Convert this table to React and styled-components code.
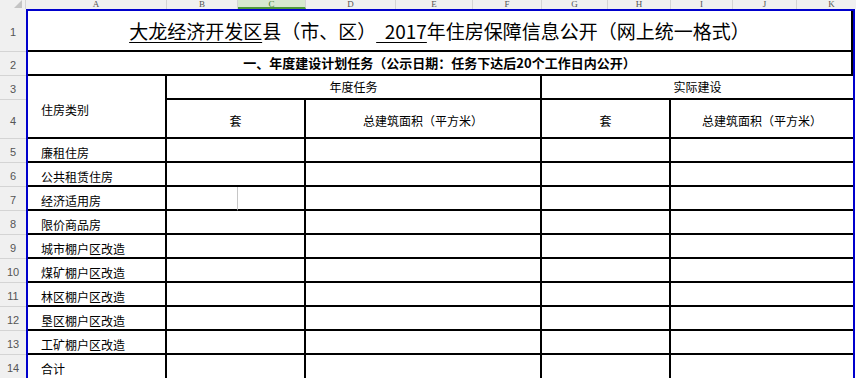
import React from "react";
import styled, { createGlobalStyle } from "styled-components";

const GlobalStyle = createGlobalStyle`
  html, body {
    margin: 0;
    padding: 0;
    background: #fff;
    overflow: hidden;
  }
  body {
    font-family: "Noto Sans CJK SC", "Liberation Sans", sans-serif;
  }
`;

const columns = [
  { label: "A", width: 141 },
  { label: "B", width: 71 },
  { label: "C", width: 68, selected: true },
  { label: "D", width: 90 },
  { label: "E", width: 77 },
  { label: "F", width: 69 },
  { label: "G", width: 66 },
  { label: "H", width: 63 },
  { label: "I", width: 62 },
  { label: "J", width: 64 },
  { label: "K", width: 70 },
];

// the last row runs past the bottom of the window
const rowHeights = [43, 24, 24, 39, 24, 24, 24, 24, 24, 24, 24, 24, 24, 30];

const housingTypes = [
  "廉租住房",
  "公共租赁住房",
  "经济适用房",
  "限价商品房",
  "城市棚户区改造",
  "煤矿棚户区改造",
  "林区棚户区改造",
  "垦区棚户区改造",
  "工矿棚户区改造",
  "合计",
];

export default function App() {
  return (
    <Sheet>
      <GlobalStyle />
      <ColBar>
        <Corner>
          <CornerMark />
        </Corner>
        {columns.map((c) => (
          <ColLetter key={c.label} $w={c.width} $selected={c.selected}>
            {c.label}
          </ColLetter>
        ))}
      </ColBar>
      <Body>
        <RowHeads>
          {rowHeights.map((h, i) => (
            <RowNum key={i} $h={h} $cut={i === rowHeights.length - 1}>
              {i + 1}
            </RowNum>
          ))}
        </RowHeads>
        <Table>
          <Cell $col="1 / 7" $row="1" $size={19}>
            <Title>
              <U>大龙经济开发区</U>县（市、区）<U>{"\u00a0\u00a02017"}</U>年住房保障信息公开（网上统一格式）
            </Title>
          </Cell>
          <Cell $col="1 / 7" $row="2" $bold $size={13}>
            一、年度建设计划任务（公示日期：任务下达后20个工作日内公开）
          </Cell>
          <Cell $col="1" $row="3 / 5" $left $pt={6}>
            住房类别
          </Cell>
          <Cell $col="2 / 5" $row="3">年度任务</Cell>
          <Cell $col="5 / 7" $row="3" $last>
            实际建设
          </Cell>
          <Cell $col="2 / 4" $row="4" $pt={4}>套</Cell>
          <Cell $col="4" $row="4" $pt={4}>总建筑面积（平方米）</Cell>
          <Cell $col="5" $row="4" $pt={4}>套</Cell>
          <Cell $col="6" $row="4" $last $pt={4}>
            总建筑面积（平方米）
          </Cell>
          {housingTypes.map((t, i) => {
            const r = String(i + 5);
            const split = t === "经济适用房";
            return (
              <React.Fragment key={t}>
                <Cell $col="1" $row={r} $left $top>
                  {t}
                </Cell>
                {split ? (
                  <>
                    <Cell $col="2" $row={r} $grid />
                    <Cell $col="3" $row={r} />
                  </>
                ) : (
                  <Cell $col="2 / 4" $row={r} />
                )}
                <Cell $col="4" $row={r} />
                <Cell $col="5" $row={r} />
                <Cell $col="6" $row={r} $last />
              </React.Fragment>
            );
          })}
        </Table>
      </Body>
    </Sheet>
  );
}

const Sheet = styled.div`
  width: 856px;
  height: 378px;
  overflow: hidden;
  display: flex;
  flex-direction: column;
`;

const ColBar = styled.div`
  display: flex;
  height: 9px;
  overflow: hidden;
  background: #f0f0f0;
  flex-shrink: 0;
`;

const Corner = styled.div`
  position: relative;
  width: 26px;
  flex-shrink: 0;
  box-sizing: border-box;
  border-right: 1px solid #d4d4d4;
`;

const CornerMark = styled.div`
  position: absolute;
  right: 3px;
  bottom: 1px;
  width: 0;
  height: 0;
  border-left: 8px solid transparent;
  border-bottom: 8px solid #c4c4c4;
`;

const ColLetter = styled.div`
  width: ${(p) => p.$w}px;
  flex-shrink: 0;
  box-sizing: border-box;
  border-right: 1px solid #d4d4d4;
  border-bottom: ${(p) => (p.$selected ? "2px solid #4e9a3a" : "none")};
  background: ${(p) => (p.$selected ? "#d6e9cf" : "transparent")};
  color: ${(p) => (p.$selected ? "#3b7a2b" : "#555")};
  font-family: "Liberation Serif", serif;
  font-size: 9px;
  line-height: 8px;
  text-align: center;
`;

const Body = styled.div`
  display: flex;
  flex: 1;
  min-height: 0;
`;

const RowHeads = styled.div`
  width: 26px;
  flex-shrink: 0;
  display: flex;
  flex-direction: column;
  background: #f0f0f0;
`;

const RowNum = styled.div`
  height: ${(p) => p.$h}px;
  flex-shrink: 0;
  box-sizing: border-box;
  border-bottom: 1px solid #d4d4d4;
  display: flex;
  align-items: ${(p) => (p.$cut ? "flex-start" : "center")};
  justify-content: center;
  padding-top: ${(p) => (p.$cut ? 7 : 3)}px;
  font-family: "Liberation Sans", sans-serif;
  font-size: 11px;
  color: #555;
`;

const Table = styled.div`
  display: grid;
  grid-template-columns: 139px 71px 68px 236px 129px 182px;
  grid-template-rows: 41px 24px 24px 39px repeat(9, 24px) 30px;
  border: 2px solid #0000cc;
  border-bottom: none;
  align-self: flex-start;
  background: #fff;
`;

const Cell = styled.div`
  grid-column: ${(p) => p.$col};
  grid-row: ${(p) => p.$row};
  box-sizing: border-box;
  border-bottom: 2px solid #000;
  border-right: ${(p) =>
    p.$last ? "none" : p.$grid ? "1px solid #c6c6c6" : "2px solid #000"};
  display: flex;
  align-items: ${(p) => (p.$top ? "flex-start" : "center")};
  justify-content: ${(p) => (p.$left ? "flex-start" : "center")};
  padding-left: ${(p) => (p.$left ? "13px" : "0")};
  padding-top: ${(p) => (p.$top ? 6 : p.$pt || 0)}px;
  font-size: ${(p) => p.$size || 12}px;
  font-weight: ${(p) => (p.$bold ? 700 : 400)};
  color: #000;
  white-space: nowrap;
  line-height: 1.3;
`;

const Title = styled.span`
  padding-top: 2px;
`;

const U = styled.span`
  text-decoration: underline;
  text-decoration-thickness: 1px;
  text-underline-offset: 3px;
`;
